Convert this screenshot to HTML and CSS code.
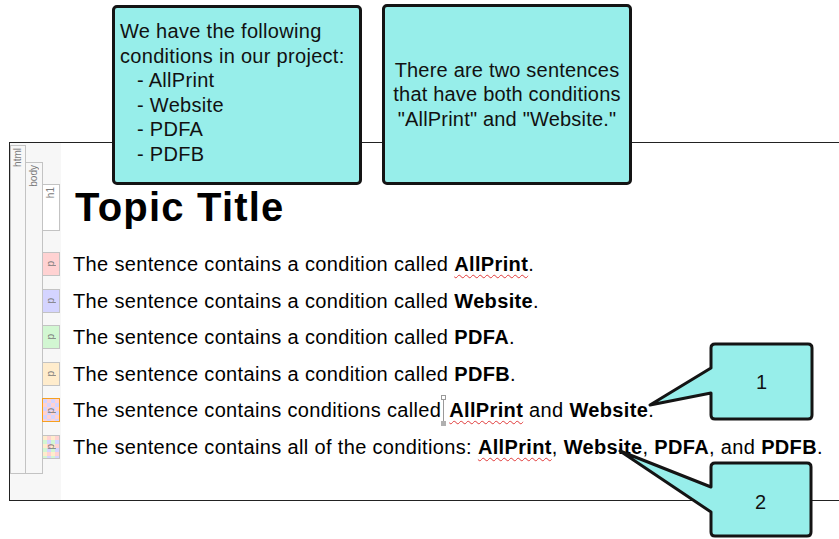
FILE: index.html
```html
<!DOCTYPE html>
<html lang="en">
<head>
    <meta charset="UTF-8">
    <title>Conditions</title>
    <link rel="stylesheet" href="styles.css">
</head>
<body>
    <div class="editor">
        <div class="tag tag-html"><span class="tag-label">html</span></div>
        <div class="tag tag-body"><span class="tag-label">body</span></div>
        <div class="doc">
            <div class="row row-h1">
                <div class="tag tag-h1"><span class="tag-label">h1</span></div>
                <h1>Topic Title</h1>
            </div>
            <div class="row">
                <div class="tag tag-p cond-allprint"><span class="tag-label">p</span></div>
                <p>The sentence contains a condition called <b class="spell">AllPrint</b>.</p>
            </div>
            <div class="row">
                <div class="tag tag-p cond-website"><span class="tag-label">p</span></div>
                <p>The sentence contains a condition called <b>Website</b>.</p>
            </div>
            <div class="row">
                <div class="tag tag-p cond-pdfa"><span class="tag-label">p</span></div>
                <p>The sentence contains a condition called <b>PDFA</b>.</p>
            </div>
            <div class="row">
                <div class="tag tag-p cond-pdfb"><span class="tag-label">p</span></div>
                <p>The sentence contains a condition called <b>PDFB</b>.</p>
            </div>
            <div class="row">
                <div class="tag tag-p cond-two selected"><span class="tag-label">p</span></div>
                <p>The sentence contains conditions called<span class="caret"></span> <b class="spell">AllPrint</b> and <b>Website</b>.</p>
            </div>
            <div class="row">
                <div class="tag tag-p cond-all"><span class="tag-label">p</span></div>
                <p>The sentence contains all of the conditions: <b class="spell">AllPrint</b>, <b>Website</b>, <b>PDFA</b>, and <b>PDFB</b>.</p>
            </div>
        </div>
    </div>

    <!-- notes laid over the editor -->
    <div class="note note-list">
        <div>We have the following</div>
        <div>conditions in our project:</div>
        <div class="item">- AllPrint</div>
        <div class="item">- Website</div>
        <div class="item">- PDFA</div>
        <div class="item">- PDFB</div>
    </div>
    <div class="note note-both">
        <div>There are two sentences<br>that have both conditions<br>"AllPrint" and "Website."</div>
    </div>

    <div class="callout callout-1">
        <svg width="168" height="82" viewBox="0 0 168 82">
            <path d="M68 3 H161 Q165 3 165 7 V74 Q165 78 161 78 H68 Q64 78 64 74 V52 L3 64 L64 27 V7 Q64 3 68 3 Z"/>
        </svg>
        <span class="num">1</span>
    </div>
    <div class="callout callout-2">
        <svg width="204" height="92" viewBox="0 0 204 92">
            <path d="M103 15 H195 Q199 15 199 19 V84 Q199 88 195 88 H103 Q99 88 99 84 V64 L8 3 L99 39 V19 Q99 15 103 15 Z"/>
        </svg>
        <span class="num">2</span>
    </div>
</body>
</html>
```

FILE: styles.css
```css
body {
    margin: 0;
    height: 539px;
    overflow: hidden;
    position: relative;
    font-family: "Liberation Sans", Arial, sans-serif;
    color: #000;
    background: #fff;
}
.editor {
    margin: 142px 0 0 9px;
    height: 357px;
    border: 1px solid #222;
    border-right: none;
    display: flex;
    align-items: flex-start;
    background: linear-gradient(to right, #f7f7f7 51px, #fff 51px);
}
.tag {
    box-sizing: border-box;
    border: 1px solid #c3c3c3;
    display: flex;
    flex-direction: column;
    align-items: center;
    flex-shrink: 0;
}
.tag-label {
    writing-mode: vertical-rl;
    transform: rotate(180deg);
    font-size: 10px;
    line-height: 12px;
    color: #7a7a7a;
    padding-bottom: 2px;
}
.tag-html {
    width: 16px;
    height: 329px;
    margin-top: 2px;
}
.tag-body {
    width: 18px;
    height: 312px;
    margin-top: 19px;
    margin-left: -1px;
}
.doc {
    margin-left: -1px;
    padding-top: 41px;
    display: flex;
    flex-direction: column;
    gap: 12.6px;
}
.row {
    display: flex;
    align-items: center;
}
.row-h1 {
    margin-bottom: 8.4px;
}
.tag-h1 {
    width: 18px;
    height: 47px;
    background: #fff;
}
.tag-p {
    width: 18px;
    height: 24px;
    justify-content: center;
}
.tag-p .tag-label {
    padding: 0;
}
.cond-allprint { background: #ffd2d2; }
.cond-website { background: #d4d4ff; }
.cond-pdfa { background: #d2f7d2; }
.cond-pdfb { background: #ffeccc; }
.cond-two {
    background: repeating-conic-gradient(#ffd2d2 0 25%, #d4d4ff 0 50%) 0 0 / 8px 8px;
}
.cond-all {
    background: conic-gradient(#ffd2d2 0 25%, #d4d4ff 0 50%, #d2f7d2 0 75%, #ffeccc 0) 0 0 / 8px 8px;
}
.selected {
    border-color: #f5a020;
}
h1 {
    margin: 0 0 0 15px;
    font-size: 40px;
    letter-spacing: 1.2px;
    line-height: 47px;
    font-weight: bold;
}
p {
    margin: 0 0 0 13px;
    font-size: 20px;
    letter-spacing: 0.35px;
    line-height: 24px;
}
.spell {
    text-decoration: underline wavy #e03a3a;
    text-decoration-thickness: 1px;
    text-underline-offset: 3px;
}
.caret {
    display: inline-block;
    position: relative;
    width: 0;
    height: 0;
    margin-left: 2px;
}
.caret::before {
    content: "";
    position: absolute;
    left: 0;
    top: -20px;
    width: 1px;
    height: 26px;
    background: #9a9a9a;
}
.caret::after {
    content: "";
    position: absolute;
    left: -2px;
    top: -22px;
    width: 3px;
    height: 3px;
    border: 1px solid #9a9a9a;
    background: #fff;
    box-shadow: 0 26px 0 0 #b0b0b0;
}

.note {
    position: absolute;
    box-sizing: border-box;
    border: 3px solid #141414;
    border-radius: 5px;
    background: #97eeea;
    font-size: 20px;
    letter-spacing: 0.3px;
    line-height: 24.6px;
    color: #111;
}
.note-list {
    left: 112px;
    top: 5px;
    width: 250px;
    height: 180px;
    padding: 11px 5px;
}
.note-list .item {
    padding-left: 17px;
}
.note-both {
    left: 382px;
    top: 4px;
    width: 250px;
    height: 181px;
    display: flex;
    align-items: center;
    justify-content: center;
    text-align: center;
    letter-spacing: 0.2px;
}
.callout {
    position: absolute;
}
.callout svg {
    display: block;
}
.callout path {
    fill: #97eeea;
    stroke: #141414;
    stroke-width: 3;
    stroke-linejoin: round;
}
.callout .num {
    position: absolute;
    font-size: 20px;
    color: #111;
}
.callout-1 {
    left: 647px;
    top: 341px;
}
.callout-1 .num {
    left: 109px;
    top: 30px;
}
.callout-2 {
    left: 612px;
    top: 448px;
}
.callout-2 .num {
    left: 143px;
    top: 43px;
}
```
